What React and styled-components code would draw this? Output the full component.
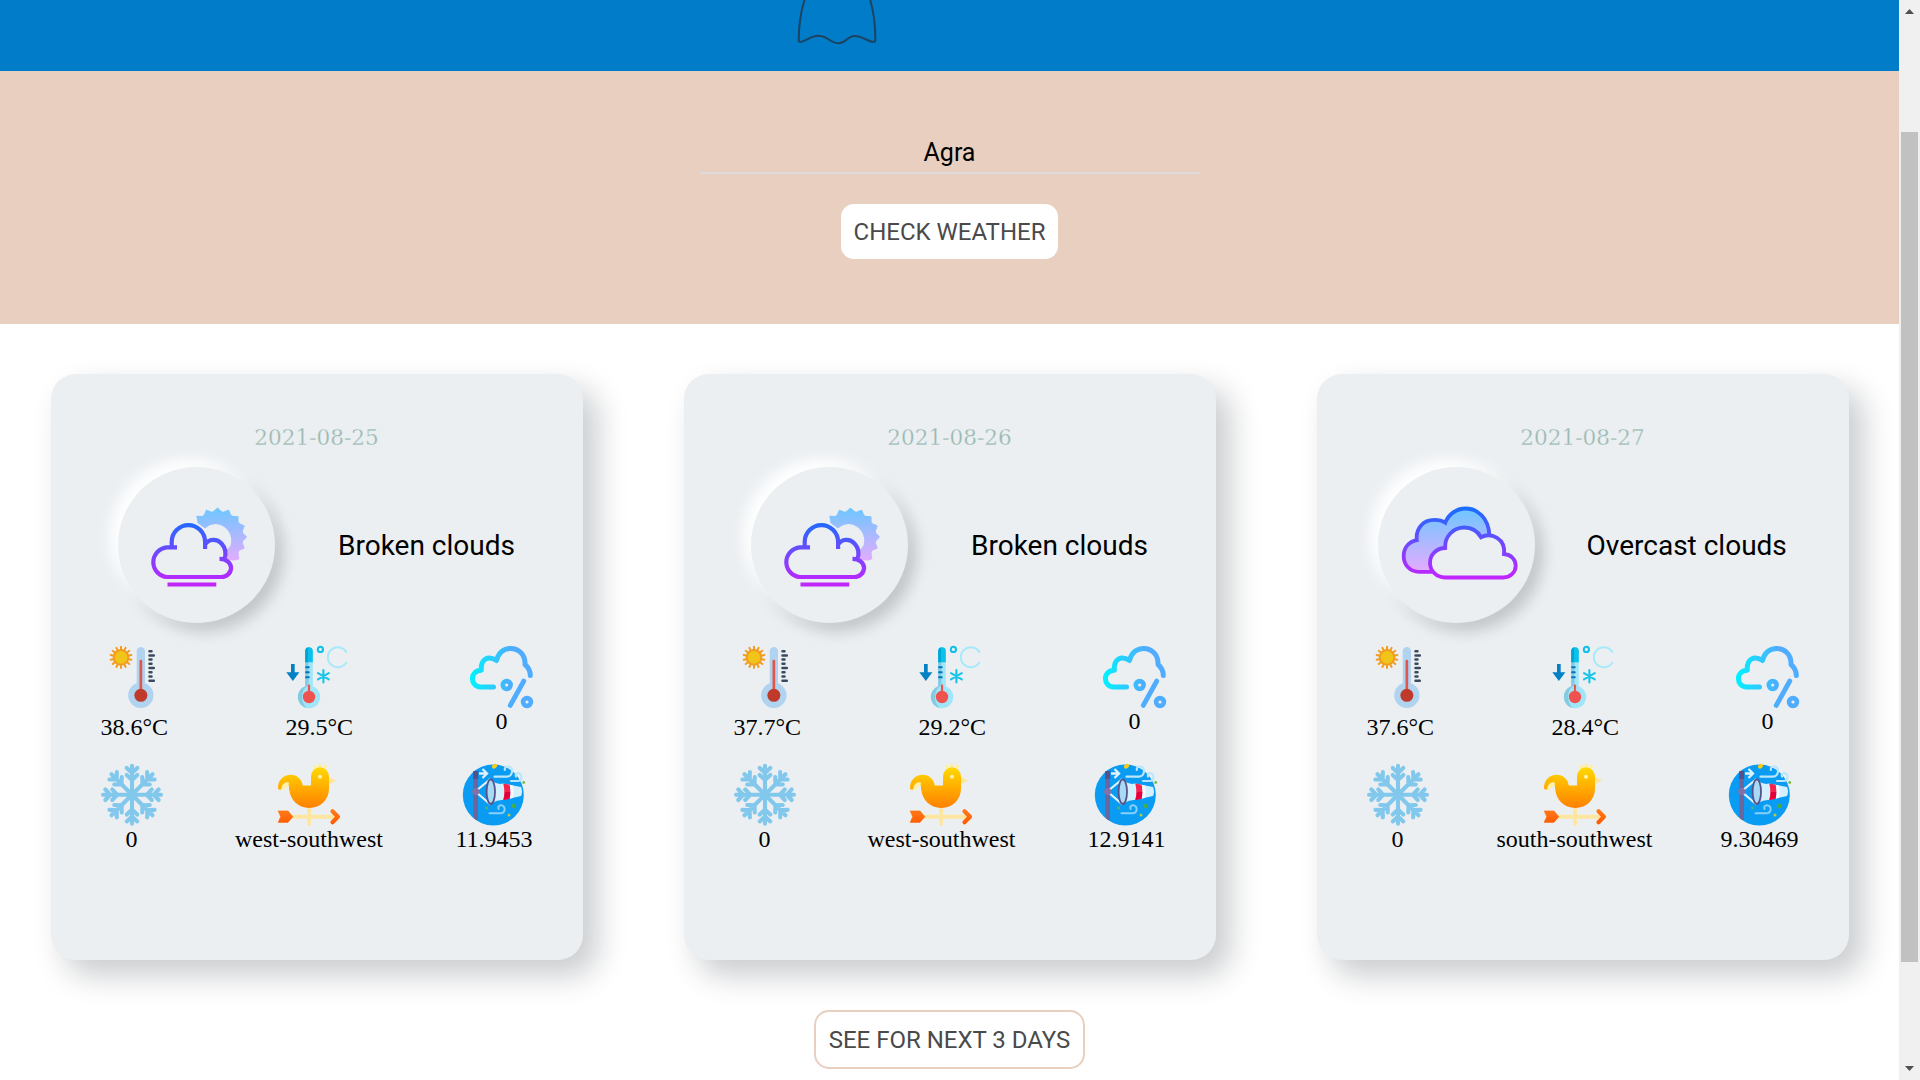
import React from "react";
import styled, { createGlobalStyle } from "styled-components";

const GlobalStyle = createGlobalStyle`
  * { box-sizing: border-box; }
  html, body { margin: 0; padding: 0; background: #fff; overflow: hidden; }
`;

const Window = styled.div`
  display: flex;
  width: 1920px;
  height: 1080px;
  overflow: hidden;
`;

const Page = styled.main`
  display: flex;
  flex-direction: column;
  width: 1899px;
  height: 1080px;
  background: #fff;
  overflow: hidden;
`;

const Header = styled.header`
  height: 71px;
  padding-left: 797px;
  background: #007cc8;
`;

const Ghost = styled.svg`
  display: block;
`;

const SearchPanel = styled.section`
  display: flex;
  flex-direction: column;
  align-items: center;
  height: 253px;
  padding-top: 62px;
  background: #e8cfc0;
`;

const CityInput = styled.input`
  width: 500px;
  height: 41px;
  margin: 0 0 30px;
  padding: 0;
  border: 0;
  border-bottom: 2px solid #dcdcdc;
  outline: 0;
  background: transparent;
  color: #000;
  font: 400 25px Roboto, sans-serif;
  text-align: center;
`;

const Button = styled.button`
  width: ${(p) => p.$width}px;
  height: ${(p) => p.$height}px;
  padding: 0;
  border: ${(p) => (p.$outlined ? "2px solid #e8cfc0" : "0")};
  border-radius: ${(p) => (p.$outlined ? 15 : 13)}px;
  background: #fff;
  color: #4a4a4a;
  font: 400 ${(p) => p.$size}px Roboto, sans-serif;
  white-space: nowrap;
`;

const Forecast = styled.section`
  display: flex;
  justify-content: space-around;
  height: 636px;
  padding-top: 50px;
`;

const Card = styled.article`
  width: 532px;
  height: 586px;
  border-radius: 25px;
  background: #ebeff2;
  box-shadow: 14px 15px 31px rgba(10, 16, 28, 0.22);
`;

const DateLabel = styled.h2`
  height: 93px;
  margin: 0;
  padding-top: 51px;
  color: #98b8af;
  font: 400 21.6px/26px "DejaVu Serif", serif;
  text-align: center;
  -webkit-text-stroke: 0.3px #ebeff2;
`;

const Summary = styled.div`
  display: flex;
  align-items: center;
  justify-content: space-around;
  height: 156px;
  padding: 0 36px;
`;

const Disc = styled.div`
  display: flex;
  align-items: center;
  justify-content: center;
  width: 157px;
  height: 156px;
  border-radius: 50%;
  background: #ebeff2;
  box-shadow: -8px -8px 15px #fff, 8px 8px 15px rgba(0, 0, 0, 0.18);
`;

const Description = styled.span`
  color: #000;
  font: 400 28px Roboto, sans-serif;
  white-space: nowrap;
`;

const Readings = styled.div`
  display: flex;
  justify-content: space-between;
  height: ${(p) => p.$height}px;
  margin-top: ${(p) => p.$top}px;
  padding: 0 50px;
`;

const Reading = styled.div`
  display: flex;
  flex-direction: column;
  align-items: ${(p) => (p.$start ? "flex-start" : "center")};
  gap: ${(p) => (p.$start ? 6 : 0)}px;
  color: #000;
  font: 400 24px/27px "Liberation Serif", serif;
  white-space: nowrap;
`;

const Small = styled.svg.attrs({ width: 62, height: 62, fill: "none" })`
  display: block;
  overflow: visible;
`;

const Large = styled.svg.attrs({ width: 126, height: 126, fill: "none" })`
  display: block;
`;

const More = styled.div`
  display: flex;
  justify-content: center;
  padding-top: 50px;
`;

const Track = styled.aside`
  display: flex;
  flex-direction: column;
  align-items: center;
  width: 21px;
  height: 1080px;
  padding: 9px 1px 9px 0;
  background: #f0f0f0;
`;

const Thumb = styled.div`
  width: 17px;
  height: 830px;
  margin: 118px 0 104px;
  background: #c1c1c1;
`;

const Arrow = styled.svg.attrs({ width: 9, height: 5, viewBox: "0 0 9 5" })`
  display: block;
`;

const Defs = styled.svg.attrs({ width: 0, height: 0 })`
  position: absolute;
`;

const polar = (cx, cy, r, deg) => {
  const a = (deg * Math.PI) / 180;
  return `${(cx + r * Math.cos(a)).toFixed(2)} ${(cy + r * Math.sin(a)).toFixed(2)}`;
};

const sunPath = () => {
  let d = `M${polar(84, 55, 30, -135)}`;
  for (let a = -135; a < 45; a += 22.5) {
    d += ` Q${polar(84, 55, 28, a + 4)} ${polar(84, 55, 26, a + 9)} L${polar(84, 55, 26, a + 13.5)} Q${polar(84, 55, 28, a + 18.5)} ${polar(84, 55, a === 22.5 ? 31 : 29.5, a + 22.5)}`;
  }
  return `${d} Q101 80 93 77.5 L92.5 69 L97 63.5 A15.6 16.5 0 0 0 71.500 46.500 L64 41 Z`;
};

const Gradients = () => (
  <Defs>
    <defs>
      <linearGradient id="line" x1="0" y1="26" x2="0" y2="98" gradientUnits="userSpaceOnUse">
        <stop offset="0" stopColor="#1a6dff" />
        <stop offset="1" stopColor="#c822ff" />
      </linearGradient>
      <linearGradient id="fog" x1="0" y1="38" x2="0" y2="104" gradientUnits="userSpaceOnUse">
        <stop offset="0" stopColor="#1a6dff" />
        <stop offset="1" stopColor="#c822ff" />
      </linearGradient>
      <linearGradient id="shade" x1="0" y1="26" x2="0" y2="90" gradientUnits="userSpaceOnUse">
        <stop offset="0" stopColor="#6dc7ff" />
        <stop offset="1" stopColor="#e6abff" />
      </linearGradient>
      <linearGradient id="sun" x1="0" y1="26" x2="0" y2="80" gradientUnits="userSpaceOnUse">
        <stop offset="0" stopColor="#6dc7ff" />
        <stop offset="1" stopColor="#e6abff" />
      </linearGradient>
      <linearGradient id="rain" x1="0" y1="31" x2="42" y2="31" gradientUnits="userSpaceOnUse">
        <stop offset="0" stopColor="#00f2fe" />
        <stop offset="1" stopColor="#4facfe" />
      </linearGradient>
      <linearGradient id="bird" x1="0" y1="3" x2="0" y2="44" gradientUnits="userSpaceOnUse">
        <stop offset="0" stopColor="#ffda00" />
        <stop offset="1" stopColor="#ff8000" />
      </linearGradient>
      <linearGradient id="fletch" x1="0" y1="46" x2="0" y2="60" gradientUnits="userSpaceOnUse">
        <stop offset="0" stopColor="#ff7a1a" />
        <stop offset="1" stopColor="#ff5a00" />
      </linearGradient>
      <clipPath id="disc"><circle cx="30.3" cy="31" r="30.5" /></clipPath>
    </defs>
  </Defs>
);

const BrokenClouds = () => (
  <Large viewBox="0.5 0 126 126">
    <path d={sunPath()} fill="url(#sun)" />
    <path
      d="M43.500 65.300H33.500A14.900 14.900 0 0 0 33.500 95H88A9.600 9.600 0 0 0 97.600 86C97.600 81 93 76.800 86 76.800M38.200 67V60A16.700 16.900 0 0 1 71.600 60V67M71.600 62.500C75 57 83 56 88 61.500C92.500 66.500 93 71.500 90.800 77"
      stroke="url(#fog)" strokeWidth="4.200"
    />
    <path d="M34 102.600H82.800" stroke="#c026f8" strokeWidth="4" />
  </Large>
);

const OvercastClouds = () => (
  <Large viewBox="0 -0.500 126 126">
    <path
      d="M38 89.300H25C16 89.300 9.700 82.500 9.700 73.500C9.700 65 15 59 22.800 57.600C21.500 46 29 37.400 40.500 37.400C45 37.400 48.500 38.300 51.300 40.200C54.500 31.500 62.500 26 71.700 26C84 26 94.500 36 95.300 52L87 54.700C81 43.500 64 42 56 52Q50.500 59 51 65.300C42 66.300 36 72 36 80Q36 85 38 89.300Z"
      fill="url(#shade)"
    />
    <path
      d="M38.500 89.300H25C16 89.300 9.700 82.500 9.700 73.500C9.700 65 15 59 22.800 57.600C21.500 46 29 37.400 40.500 37.400C45 37.400 48.500 38.300 51.300 40.200C54.500 31.500 62.500 26 71.700 26C84 26 94.500 36 95.300 52"
      stroke="url(#line)" strokeWidth="3.800"
    />
    <path
      d="M51 95C42.500 95 36 88.500 36 80.300C36 72 42.500 65.700 51.200 65.500C50.500 54 59 45 70.300 45C78 45 83.500 48.500 87 54.700C97 49.500 112 56 110 71.500C117 72 121.700 77 121.700 83.300C121.700 90 116 95 109.300 95Z"
      stroke="url(#line)" strokeWidth="3.800"
    />
  </Large>
);

const range = (n) => Array.from({ length: n }, (_, i) => i);

const HotIcon = () => (
  <Small viewBox="0 0 62 62">
    {range(14).map((i) => (
      <path key={i} d={`M${polar(20, 11.4, 7, -90 + (i * 360) / 14)}L${polar(20, 11.4, 10.6, -90 + (i * 360) / 14)}`} stroke="#f29c1f" strokeWidth="2" strokeLinecap="round" />
    ))}
    <circle cx="20" cy="11.400" r="7.300" fill="#f0c419" stroke="#f29c1f" strokeWidth="2" />
    <path d="M35.700 5.200a4.150 4.150 0 0 1 8.300 0V37.300a12.700 12.700 0 1 1-8.300 0Z" fill="#b0d3f0" />
    <path d="M39.850 15V44" stroke="#e0584c" strokeWidth="2.700" strokeLinecap="round" />
    <circle cx="39.850" cy="49.300" r="6.500" fill="#c03a2b" />
    <path d="M48.500 5.200h2M48.500 9.400h4.300M48.500 13.600h2M48.500 17.800h2M48.500 22h4.300M48.500 26.200h2M48.500 30.400h2M48.500 34.700h4.300" stroke="#3a4a5e" strokeWidth="2.500" strokeLinecap="round" />
  </Small>
);

const ColdIcon = () => (
  <Small viewBox="0 0 62 62">
    <path d="M19.200 5a3.800 3.800 0 0 1 7.600 0V40.300a11.300 11.300 0 1 1-7.600 0Z" fill="#a1e6f8" />
    <path d="M19.200 16H22.500V39Q16 43 16 51Q16 58 21 62A11.300 11.300 0 0 1 19.200 40.300Z" fill="#82cbe0" />
    <path d="M19.200 16.300V5a3.800 3.800 0 0 1 7.600 0V16.300Z" fill="#0bc0ea" />
    <path d="M19.200 16.300V5Q19.500 2 22 1.300V16.300Z" fill="#00a6d2" />
    <path d="M20 21.300h2.800M20 26.300h2.800M20 31.300h2.800" stroke="#0277bd" strokeWidth="1.900" strokeLinecap="round" />
    <path d="M23 39.500V48" stroke="#ef5350" strokeWidth="2.200" strokeLinecap="round" />
    <circle cx="23" cy="51" r="6.200" fill="#ef5350" />
    <path d="M5 18H8.700V26.300H13.400L6.850 35L.3 26.300H5Z" fill="#0481c4" />
    <circle cx="34.400" cy="3.400" r="2.600" stroke="#10c0e8" strokeWidth="2.100" />
    <path d="M60.700 6.700A10 10 0 1 0 60.700 15.900" stroke="#a6e9fa" strokeWidth="2" />
    <path d="M37.400 24V36.500M32 27.200L42.800 33.400M32 33.400L42.800 27.200" stroke="#18c5e8" strokeWidth="2.100" strokeLinecap="round" />
  </Small>
);

const RainIcon = () => (
  <Small viewBox="1 0 62 62" stroke="url(#rain)" strokeWidth="5" strokeLinecap="round" strokeLinejoin="round">
    <path d="M23.500 41H10.500C5.500 41 2.400 37 2.400 32.500C2.400 28 6 24.300 11.300 24.200C10.500 13 18 9 26.500 14.500C28.500 6.500 34 2.400 40.500 2.400C49 2.400 55.500 9 55 18.500C58.500 21.500 60.300 25 60.300 29.500" />
    <circle cx="36.700" cy="39" r="3.900" strokeWidth="4.600" />
    <circle cx="57" cy="56" r="3.900" strokeWidth="4.600" />
    <path d="M53.800 35L40.200 59.500" strokeWidth="4.800" />
  </Small>
);

const SnowIcon = () => (
  <Small viewBox="0 0.300 62 62" stroke="#82c8ec" strokeWidth="4.100" strokeLinecap="round">
    {range(8).map((i) => (
      <path key={i} d="M31 31V2M25.700 4.300L31 9.200L36.300 4.300M25.700 11.200L31 16.200L36.300 11.200" transform={`rotate(${i * 45} 31 31)`} />
    ))}
  </Small>
);

const VaneIcon = () => (
  <Small viewBox="0 0 62 62">
    <g fill="#fff0a0">
      <circle cx="37" cy="2.900" r="2.100" />
      <circle cx="42" cy="1.700" r="2" />
      <circle cx="47" cy="2.900" r="2.100" />
    </g>
    <path d="M50.500 12.500L58 16.700L50.500 20.500Z" fill="#fee59a" />
    <path d="M31 43V60M13 52.700H57" stroke="#ffe6a0" strokeWidth="3.900" strokeLinecap="round" />
    <path d="M0 24C0 16 5.500 10.700 12.700 10.700C19 10.700 24.200 15.500 24.700 21.400H33V12.500A9 9.200 0 0 1 51 12.500V24.500C51 35.500 42.500 44 31.300 44C20 44 12 35.500 11.300 25.500H1.600A1.600 1.600 0 0 1 0 24Z" fill="url(#bird)" />
    <path d="M3.300 26C3.300 20.500 6.500 18 10.800 18.400V21.500Q8.500 22 8.500 24L11.300 26Z" fill="#fff0a8" />
    <path d="M6.300 26.500Q6.300 22.300 11 21.700V26.500Z" fill="#ebeff2" />
    <circle cx="42" cy="12.700" r="2" fill="#fff3b0" />
    <path d="M.3 47H10L14.700 52.700L10 58.300H.3L2.800 52.700Z" fill="url(#fletch)" stroke="url(#fletch)" strokeWidth=".8" strokeLinejoin="round" />
    <path d="M54.500 47.300L59.900 52.700L54.500 58.300" stroke="url(#fletch)" strokeWidth="4.200" strokeLinecap="round" strokeLinejoin="round" />
  </Small>
);

const WindIcon = () => (
  <Small viewBox="0 0 62 62">
    <circle cx="30.300" cy="31" r="30.500" fill="#0a9cf3" />
    <path d="M12.700 8V56" stroke="#6b659c" strokeWidth="4.600" clipPath="url(#disc)" />
    <path d="M12.700 7V15" stroke="#55508a" strokeWidth="5" />
    <path d="M16 9.500H23.500M19.500 5L24 9.500L19.500 14" stroke="#dff2ff" strokeWidth="2.300" />
    <path d="M13.500 26.500L27.500 15M13.500 28.500L27.500 40.500" stroke="#e2f3fd" strokeWidth="2.200" />
    <circle cx="12.700" cy="27.500" r="3.600" fill="#8071a8" />
    <path d="M29 16.500Q34 21 40 19.500L58 23Q60 27.500 58 32L40 36Q35 35.500 29 39Z" fill="#d3f0fc" />
    <path d="M40.300 19.500L46.700 20.700Q48.500 28 46.700 34.700L40.300 36Q42.300 28 40.300 19.500Z" fill="#f5234e" />
    <path d="M42 28H47.500Q47.500 31.500 46.700 34.700L40.300 36Q41.800 32 42 28Z" fill="#e4003c" />
    <path d="M46.700 20.700L50 21.400Q51.500 28 50 33.800L46.700 34.700Q48.500 28 46.700 20.700Z" fill="#f4fbff" />
    <ellipse cx="27.800" cy="27.700" rx="4.200" ry="12.300" fill="#a9daf5" stroke="#57548c" strokeWidth="1.800" />
    <path d="M31.500 12.700H44C50 12.700 51 2.500 45 2.500Q41.500 2.500 41.800 6M48 17H54.500C60 17 59.500 9 55 9.200Q52 9.500 53 12.500" stroke="#b9e6fb" strokeWidth="2.200" strokeLinecap="round" />
    <path d="M26.500 49.300H37C43.500 49.300 42.500 41 38 41.200Q34.500 41.500 35.500 45" stroke="#86d0fa" strokeWidth="2" strokeLinecap="round" />
    <ellipse cx="31.500" cy="2.200" rx="2.800" ry="2.200" fill="#f7cd16" transform="rotate(-35 31.500 2.200)" />
    <ellipse cx="50.500" cy="42" rx="2.600" ry="2" fill="#45ad42" transform="rotate(35 50.500 42)" />
    <circle cx="46" cy="51" r="1.500" fill="#b6cb35" />
    <circle cx="23.500" cy="44" r="1.400" fill="#4bb86b" />
    <circle cx="60.700" cy="18.500" r="1.400" fill="#78bd45" />
  </Small>
);

const days = [
  { date: "2021-08-25", text: "Broken clouds", Icon: BrokenClouds, high: "38.6°C", low: "29.5°C", wind: "west-southwest", speed: "11.9453" },
  { date: "2021-08-26", text: "Broken clouds", Icon: BrokenClouds, high: "37.7°C", low: "29.2°C", wind: "west-southwest", speed: "12.9141" },
  { date: "2021-08-27", text: "Overcast clouds", Icon: OvercastClouds, high: "37.6°C", low: "28.4°C", wind: "south-southwest", speed: "9.30469" },
];

const DayCard = ({ date, text, Icon, high, low, wind, speed }) => (
  <Card>
    <DateLabel>{date}</DateLabel>
    <Summary>
      <Disc><Icon /></Disc>
      <Description>{text}</Description>
    </Summary>
    <Readings $top={23} $height={95}>
      <Reading $start><HotIcon /><span>{high}</span></Reading>
      <Reading $start><ColdIcon /><span>{low}</span></Reading>
      <Reading><RainIcon /><span>0</span></Reading>
    </Readings>
    <Readings $top={23} $height={89}>
      <Reading><SnowIcon /><span>0</span></Reading>
      <Reading><VaneIcon /><span>{wind}</span></Reading>
      <Reading><WindIcon /><span>{speed}</span></Reading>
    </Readings>
  </Card>
);

export default function App() {
  return (
    <>
      <GlobalStyle />
      <Gradients />
      <Window>
        <Page>
          <Header>
            <Ghost width="80" height="46" viewBox="0 0 80 46" fill="none">
              <path d="M7.800 -1C4 11 1.700 27 1.700 40.500Q1.700 42.200 4.500 41.800C10 40.500 14 35.800 21.500 35.800C30 35.800 34 43.300 41.500 43.300C49.500 43.300 50 36 57.500 36C66 36 70 41.500 76 41.800Q78.300 42.200 78.300 40.500C78.500 27 77 13 73 -1" stroke="#1c4361" strokeWidth="2" />
            </Ghost>
          </Header>
          <SearchPanel>
            <CityInput defaultValue="Agra" />
            <Button $width={217} $height={55} $size={24}>CHECK WEATHER</Button>
          </SearchPanel>
          <Forecast>
            {days.map((day) => <DayCard key={day.date} {...day} />)}
          </Forecast>
          <More>
            <Button $outlined $width={271} $height={59} $size={24}>SEE FOR NEXT 3 DAYS</Button>
          </More>
        </Page>
        <Track>
          <Arrow><path d="M0 5L4.500 0L9 5Z" fill="#505050" /></Arrow>
          <Thumb />
          <Arrow><path d="M0 0L4.500 5L9 0Z" fill="#505050" /></Arrow>
        </Track>
      </Window>
    </>
  );
}
